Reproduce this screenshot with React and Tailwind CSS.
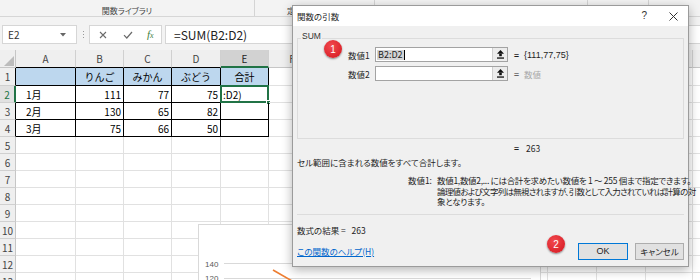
import React from "react";

// sheet columns (widths picked from the screenshot)
const COLS = [
  { id: "A", w: "w-[60px]" },
  { id: "B", w: "w-[48px]" },
  { id: "C", w: "w-[48px]" },
  { id: "D", w: "w-[49px]" },
  { id: "E", w: "w-[48px]" },
  { id: "F", w: "w-[47px]" },
  { id: "G", w: "w-[46px]" },
  { id: "H", w: "w-[47px]" },
  { id: "I", w: "w-[46px]" },
  { id: "J", w: "w-[47px]" },
  { id: "K", w: "w-[46px]" },
  { id: "L", w: "w-[49px]" },
  { id: "M", w: "w-[49px]" },
  { id: "N", w: "w-[47px]" },
  { id: "O", w: "w-[48px]" },
];

const DATA = [
  ["", "りんご", "みかん", "ぶどう", "合計"],
  ["1月", "111", "77", "75", ":D2)"],
  ["2月", "130", "65", "82", ""],
  ["3月", "75", "66", "50", ""],
];

const ROWS = [1, 2, 3, 4, 5, 6, 7, 8, 9, 10, 11, 12, 13];

function Ribbon() {
  return (
    <div className="flex h-[17px] bg-[#f3f3f3] border-b border-[#d6d6d6] text-[8px] leading-[10px] text-[#444] [font-feature-settings:'palt']">
      <div className="w-[255px] shrink-0 border-r border-[#d4d4d4] flex justify-center pt-[6px]">関数ライブラリ</div>
      <div className="w-[120px] shrink-0 border-r border-[#d4d4d4] pl-[32px] pt-[6px]">定</div>
      <div className="w-[213px] shrink-0 border-r border-[#d4d4d4]"></div>
      <div className="w-[61px] shrink-0 border-r border-[#d4d4d4]"></div>
      <div className="flex-1"></div>
    </div>
  );
}

function FormulaBar() {
  return (
    <div className="flex items-start h-[33px] pt-[8px] bg-[#f3f3f3]">
      <div className="ml-[2px] w-[75px] h-[19px] bg-white border border-[#d6d6d6] flex items-center justify-between pl-[5px] pr-[10px]">
        <span className="text-[10px] text-[#333]">E2</span>
        <svg width="6" height="4" viewBox="0 0 6 4">
          <path d="M0 0 L6 0 L3 3.5 Z" fill="#666" />
        </svg>
      </div>
      <div className="w-[12px] h-[19px] flex flex-col items-center justify-center gap-[2px]">
        <span className="w-[1px] h-[1px] bg-[#999]"></span>
        <span className="w-[1px] h-[1px] bg-[#999]"></span>
        <span className="w-[1px] h-[1px] bg-[#999]"></span>
      </div>
      <div className="w-[73px] h-[19px] bg-white border border-[#d6d6d6] flex items-center">
        <svg width="8" height="8" viewBox="0 0 8 8" className="ml-[9px]">
          <path d="M1 1 L7 7 M7 1 L1 7" stroke="#6b6b6b" strokeWidth="1.1" />
        </svg>
        <svg width="10" height="8" viewBox="0 0 10 8" className="ml-[16px]">
          <path d="M1 4.2 L3.8 7 L9 1" stroke="#6b6b6b" strokeWidth="1.2" fill="none" />
        </svg>
        <span className="ml-[14px] italic font-['Liberation_Serif',serif] text-[11px] leading-[11px] text-[#3f7f3f]">
          f<span className="text-[8px]">x</span>
        </span>
      </div>
      <div className="ml-[3px] flex-1 h-[19px] bg-white border border-r-0 border-[#d6d6d6] flex items-center pl-[8px] text-[12px] text-[#222]">
        =SUM(B2:D2)
      </div>
    </div>
  );
}

function Sheet() {
  return (
    <div className="text-[10px]">
      {/* column header */}
      <div className="flex h-[18px]">
        <div className="relative w-[16px] shrink-0 bg-[#efefef] border-r border-b border-[#c6c6c6]">
          <svg width="10" height="10" viewBox="0 0 10 10" className="absolute right-[1px] bottom-[1px]">
            <path d="M10 0 L10 10 L0 10 Z" fill="#bcbcbc" />
          </svg>
        </div>
        {COLS.map((c, i) => (
          <div
            key={c.id}
            className={`${c.w} shrink-0 flex items-center justify-center border-r border-[#d0d0d0] ${
              i === 4
                ? "bg-[#d2d2d2] text-[#222] border-b-2 border-b-[#217346]"
                : i < 4
                ? "bg-[#efefef] text-[#444] border-b border-b-black"
                : "bg-[#efefef] text-[#444] border-b border-b-[#c6c6c6]"
            }`}
          >
            {c.id}
          </div>
        ))}
      </div>
      {ROWS.map((r) => (
        <div key={r} className={`flex ${r === 1 ? "h-[18px]" : "h-[17px]"}`}>
          <div
            className={`w-[16px] shrink-0 flex items-center justify-center border-b border-[#d0d0d0] ${
              r === 2
                ? "bg-[#e1e1e1] text-[#217346] border-r-2 border-r-[#217346]"
                : r <= 4
                ? "bg-[#efefef] text-[#444] border-r border-r-black"
                : "bg-[#efefef] text-[#444] border-r border-r-[#c6c6c6]"
            }`}
          >
            {r}
          </div>
          {COLS.map((c, i) => {
            const inTable = r <= 4 && i <= 4;
            const text = inTable ? DATA[r - 1][i] : "";
            let align = "justify-end pr-[2px]";
            if (r === 1) align = "justify-center";
            else if (i === 0) align = "justify-start pl-[10px]";
            else if (i === 4) align = "justify-start pl-[2px]";
            return (
              <div
                key={c.id}
                className={`${c.w} shrink-0 relative flex items-center border-r border-b ${align} ${
                  inTable ? "border-black" : "border-[#e1e1e1]"
                } ${r === 1 && inTable ? "bg-[#bdd7ee]" : ""}`}
              >
                {text}
                {r === 2 && i === 4 && (
                  <>
                    <div className="absolute -left-[1px] -top-[1px] w-[49px] h-[18px] border-2 border-[#217346]"></div>
                    <div className="absolute -right-[3px] -bottom-[3px] w-[5px] h-[5px] bg-[#217346] border border-white"></div>
                  </>
                )}
              </div>
            );
          })}
        </div>
      ))}
    </div>
  );
}

function Chart() {
  return (
    <div className="absolute left-[198px] top-[224px] w-[343px] h-[70px] bg-white border border-[#d9d9d9]">
      <svg width="341" height="68" className="block">
        <line x1="25" y1="38.5" x2="332" y2="38.5" stroke="#d9d9d9" />
        <line x1="25" y1="53.5" x2="332" y2="53.5" stroke="#d9d9d9" />
        <line x1="74" y1="45" x2="100" y2="60" stroke="#ed7d31" strokeWidth="1.6" />
        <text x="6" y="41.5" fontSize="8" fill="#595959" fontFamily="Liberation Sans, sans-serif">140</text>
        <text x="6" y="56" fontSize="8" fill="#595959" fontFamily="Liberation Sans, sans-serif">120</text>
      </svg>
    </div>
  );
}

function CollapseIcon() {
  return (
    <svg width="7" height="9" viewBox="0 0 7 9">
      <path d="M3.5 0 L7 3.8 L0 3.8 Z" fill="#111" />
      <rect x="2.2" y="3.8" width="2.6" height="2.4" fill="#111" />
      <rect x="0" y="7.4" width="7" height="1.3" fill="#111" />
    </svg>
  );
}

function ArgInput({ children }) {
  return (
    <div className="w-[133px] h-[15px] bg-white border border-[#a3a3a3] flex">
      <div className="flex-1 flex items-center pl-[1px] text-[9px]">{children}</div>
      <div className="w-[15px] border-l border-[#cfcfcf] bg-[#ececec] flex items-center justify-center">
        <CollapseIcon />
      </div>
    </div>
  );
}

function Dialog() {
  return (
    <div className="absolute left-[292px] top-[5px] w-[397px] h-[262px] flex flex-col bg-[#f0f0f0] border border-[#9b9b9b] shadow-[0_3px_10px_rgba(0,0,0,0.3)] text-[8.5px] leading-[10px] text-[#1e1e1e] [font-feature-settings:'palt']">
      <div className="h-[20px] shrink-0 bg-white flex items-center pl-[4px]">
        <span className="flex-1">関数の引数</span>
        <span className="text-[10px] font-['Liberation_Sans',sans-serif] text-[#333] mr-[22px]">?</span>
        <svg width="9" height="9" viewBox="0 0 9 9" className="mr-[10px]">
          <path d="M0.5 0.5 L8.5 8.5 M8.5 0.5 L0.5 8.5" stroke="#333" strokeWidth="1" />
        </svg>
      </div>
      <div className="px-[4px] flex flex-col">
        {/* SUM group */}
        <div className="relative mt-[12px] h-[101px] border border-[#dcdcdc] pt-[8px]">
          <span className="absolute -top-[8px] left-[3px] px-[1px] bg-[#f0f0f0] text-[#333] font-['Liberation_Sans',sans-serif] text-[8.5px]">SUM</span>
          <div className="flex items-center h-[15px] pl-[50px]">
            <span className="w-[27px]">数値1</span>
            <ArgInput>
              <span className="bg-[#d4d4d4] border-r border-black px-[1px]">B2:D2</span>
            </ArgInput>
            <span className="ml-[6px] font-bold">=</span>
            <span className="ml-[5px] text-[9px] font-['Liberation_Sans',sans-serif]">{"{111,77,75}"}</span>
          </div>
          <div className="flex items-center h-[15px] mt-[4px] pl-[50px]">
            <span className="w-[27px]">数値2</span>
            <ArgInput />
            <span className="ml-[6px] font-bold text-[#666]">=</span>
            <span className="ml-[5px] text-[#a8a8a8]">数値</span>
          </div>
        </div>
        <div className="mt-[4px] pl-[217px] flex">
          <span className="font-bold">=</span>
          <span className="ml-[7px]">263</span>
        </div>
        <div className="mt-[4px]">セル範囲に含まれる数値をすべて合計します。</div>
        <div className="mt-[8px] flex leading-[10.5px]">
          <span className="w-[135px] shrink-0 text-right">数値1:</span>
          <div className="ml-[5px] whitespace-nowrap">
            <div className="tracking-[-0.3px]">数値1,数値2,... には合計を求めたい数値を 1 ～ 255 個まで指定できます。</div>
            <div className="tracking-[-0.7px]">論理値および文字列は無視されますが、引数として入力されていれば計算の対</div>
            <div className="tracking-[-0.3px]">象となります。</div>
          </div>
        </div>
        <div className="mt-[7px] h-px bg-[#dcdcdc]"></div>
        <div className="mt-[10px]">数式の結果 = &nbsp; 263</div>
        <div className="mt-[8px] flex items-center h-[17px]">
          <span className="flex-1 text-[#0066cc] underline">この関数のヘルプ(H)</span>
          <div className="w-[50px] h-[17px] bg-[#e1e1e1] border border-[#0078d7] flex items-center justify-center text-[9px] font-['Liberation_Sans',sans-serif]">OK</div>
          <div className="ml-[7px] w-[49px] h-[17px] bg-[#e1e1e1] border border-[#adadad] flex items-center justify-center">キャンセル</div>
        </div>
      </div>
    </div>
  );
}

function Badge({ n, className }) {
  return (
    <div
      className={`absolute ${className} w-[18px] h-[18px] rounded-full bg-[radial-gradient(circle_at_40%_35%,#f24a4f,#d3141d)] shadow-[0_1px_2px_rgba(0,0,0,0.45)] text-white text-[10px] flex items-center justify-center font-['Liberation_Sans',sans-serif]`}
    >
      {n}
    </div>
  );
}

export default function App() {
  return (
    <div className="relative w-[700px] h-[280px] overflow-hidden bg-white text-black font-['Noto_Sans_CJK_JP',sans-serif]">
      <Ribbon />
      <FormulaBar />
      <Sheet />
      <Chart />
      <Dialog />
      <Badge n="1" className="left-[324px] top-[40px]" />
      <Badge n="2" className="left-[547px] top-[235px]" />
    </div>
  );
}
